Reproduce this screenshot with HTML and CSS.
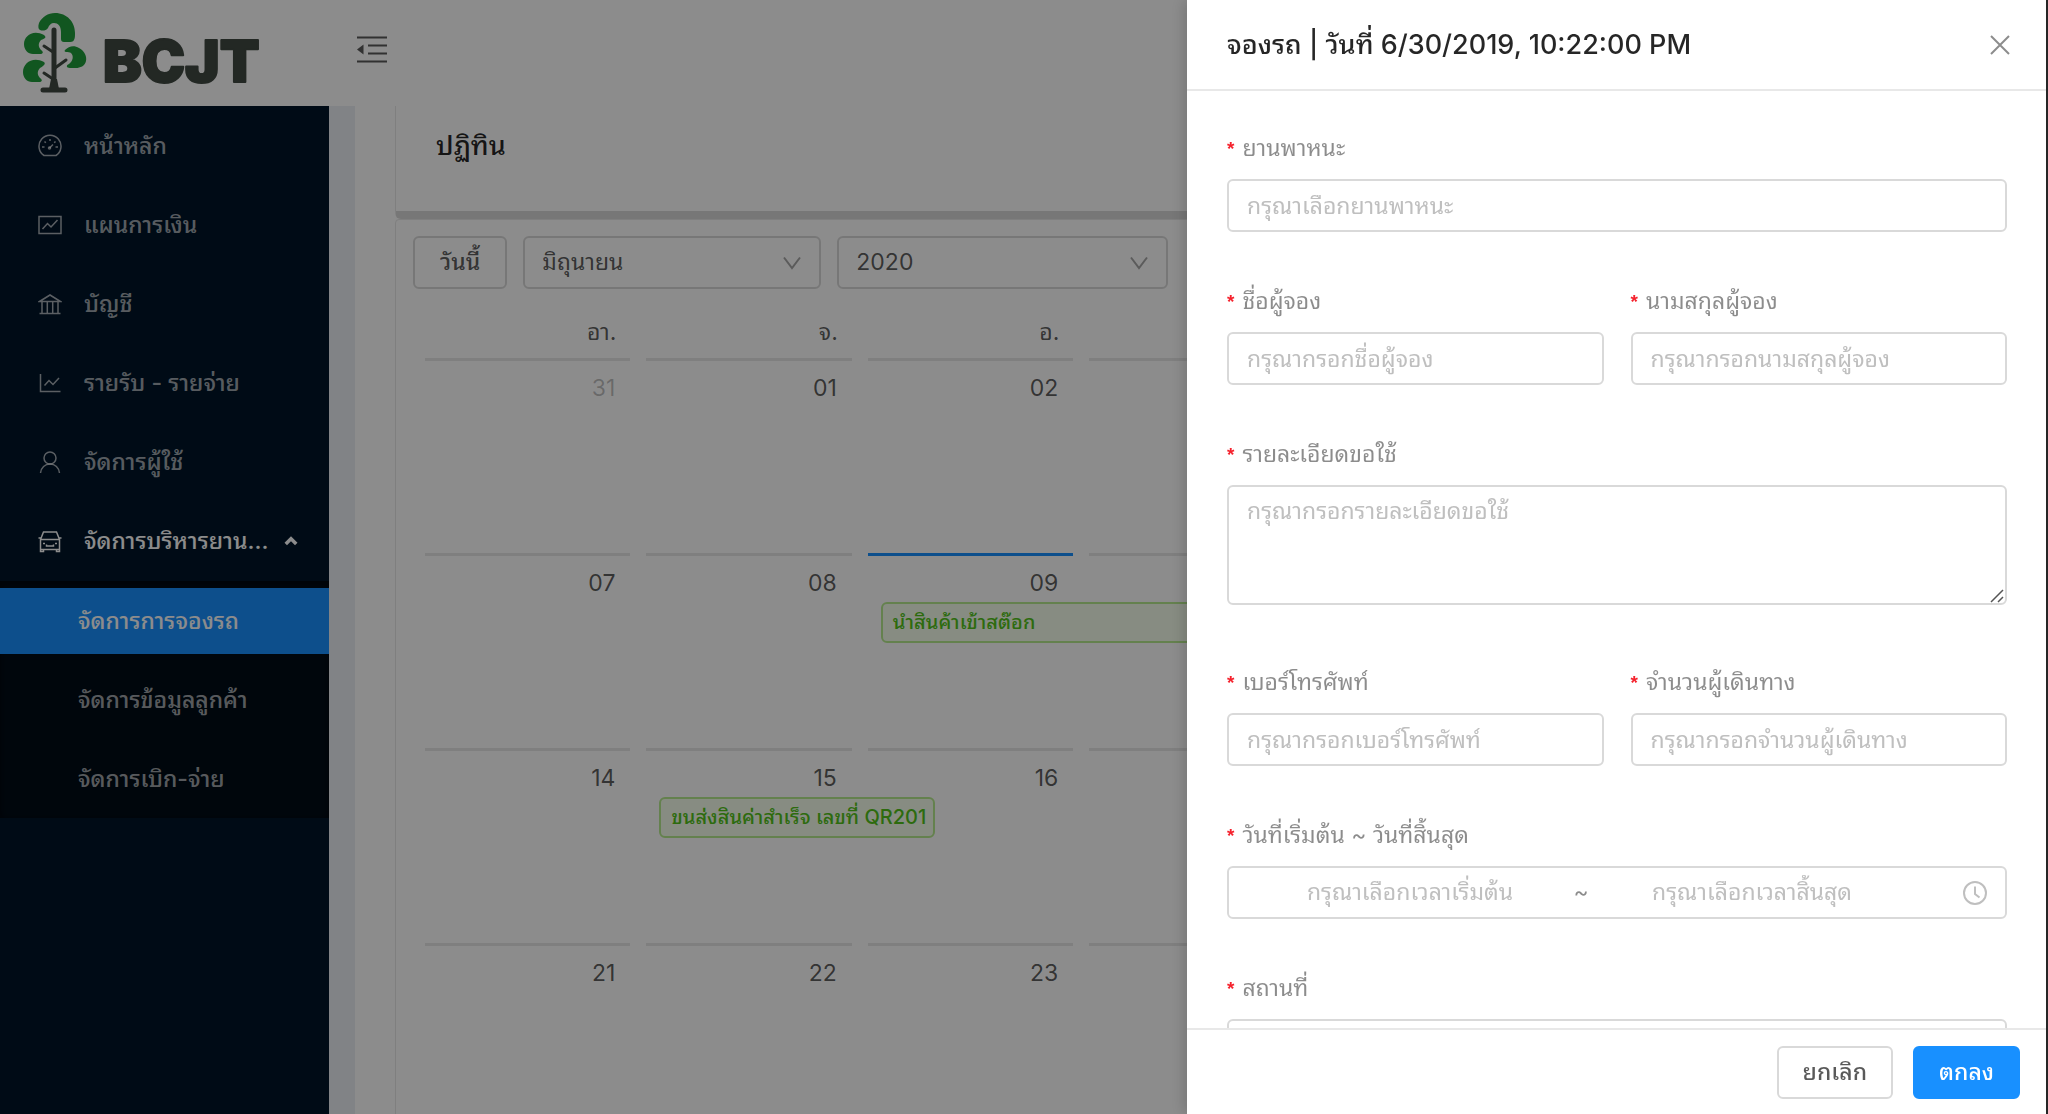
FILE: index.html
```html
<!DOCTYPE html>
<html lang="th">
<head>
<meta charset="utf-8">
<title>BCJT</title>
<link rel="stylesheet" href="styles.css">
</head>
<body>
<div class="app">
  <header class="topbar">
    <a class="brand" href="#" aria-label="BCJT">
      <svg class="brand-tree" viewBox="0 0 64 80" aria-hidden="true">
        <g fill="#1f9d3b">
          <path d="M17 17c-2-1-2-4-1-7C19 4 25 0 32 0c12 0 20 9 20 20 0 3 0 5-1 7-1 2-3 2-6 2h-4c-2 0-3-1-3-3V19c0-6-3-9-7-9-3 0-5 2-6 5-2 3-6 3-8 2z"/>
          <path d="M21 22C10 16 1 23 1 31c0 6 4 10 9 10h7c3 0 4-2 1-4-3-3-3-7 0-10 2-1 3-1 4-2 1-1 0-2-1-3z"/>
          <path d="M42 37c4-4 9-5 14-2 6 3 8 9 7 13-1 5-6 7-10 7h-6c-4 0-4-3-1-4 4-3 5-8 2-11-1-1-3-1-5-1-1 0-2-1-1-2z"/>
          <path d="M21 49C10 43 0 50 0 59c0 6 4 10 9 10h7c3 0 4-2 1-4-3-3-3-7 0-10 2-1 3-2 4-3 1-1 1-2 0-3z"/>
        </g>
        <g stroke="#404942" stroke-linecap="round" fill="none">
          <path stroke-width="5" d="M31 17v58M20 77h22"/>
          <path stroke-width="3" d="M21 33l9 6M43 47L32 55M21 60l9 6"/>
        </g>
        <path fill="#404942" d="M28 66h6l2 10H26z"/>
      </svg>
      <svg class="brand-name" viewBox="0 0 190 84" aria-hidden="true"><text x="2" y="63">BCJT</text></svg>
    </a>
    <button class="icon-button" type="button" aria-label="ย่อเมนู">
      <svg viewBox="0 0 30 28" aria-hidden="true"><path d="M0 1.500h30M11 9.500h19M11 17.500h19M0 25.500h30" stroke="currentColor" stroke-width="2.200" fill="none"/><path d="M0 13.500l6.500-5v10z" fill="currentColor" stroke="none"/></svg>
    </button>
  </header>

  <div class="shell">
    <nav class="sider">
      <ul class="menu">
        <li><a class="menu-item" href="#"><svg viewBox="0 0 24 24"><path d="M6 21.500A11 11 0 1 1 18 21.500Z"/><path d="M12 5v2M6.500 7.500l1.300 1.300M17.500 7.500l-1.300 1.300M4 13h2.500M17.500 13H20M11.500 14l3.500-3.500"/><circle cx="11.500" cy="14" r="1"/></svg><span>หน้าหลัก</span></a></li>
        <li><a class="menu-item" href="#"><svg viewBox="0 0 24 24"><path d="M1 3.500h22v17H1z"/><path d="M4.500 16l5-5.500 3.500 3.500 6.500-7"/></svg><span>แผนการเงิน</span></a></li>
        <li><a class="menu-item" href="#"><svg viewBox="0 0 24 24"><path d="M1.500 9.500L12 3l10.500 6.500zM1.500 21.500h21M4 9.500v12M9.300 9.500v12M14.700 9.500v12M20 9.500v12"/></svg><span>บัญชี</span></a></li>
        <li><a class="menu-item" href="#"><svg viewBox="0 0 24 24"><path d="M2.500 3v17.500h20M6.500 14.500l4.500-5 4 4 6-6.500"/></svg><span>รายรับ - รายจ่าย</span></a></li>
        <li><a class="menu-item" href="#"><svg viewBox="0 0 24 24"><circle cx="12" cy="8" r="6"/><path d="M2.500 23c.5-5.500 4.500-9 9.500-9s9 3.500 9.500 9"/></svg><span>จัดการผู้ใช้</span></a></li>
        <li>
          <a class="menu-item menu-item--open" href="#" aria-expanded="true"><svg viewBox="0 0 24 24"><path d="M2.500 10.500L5.500 3h13l3 7.500v10h-19zM.5 9h2.500M21 9h2.500M2.500 10.500h19M2.500 20v2.500h3V20M18.500 20v2.500h3V20M8.500 15.500v1.500h7v-1.500M5 14.500h2M17 14.500h2"/></svg><span>จัดการบริหารยาน...</span><svg class="menu-caret" viewBox="0 0 12 12"><path d="M1.500 8.500L6 4l4.500 4.500"/></svg></a>
          <ul class="submenu">
            <li><a class="submenu-item submenu-item--active" href="#" aria-current="page">จัดการการจองรถ</a></li>
            <li><a class="submenu-item" href="#">จัดการข้อมูลลูกค้า</a></li>
            <li><a class="submenu-item" href="#">จัดการเบิก-จ่าย</a></li>
          </ul>
        </li>
      </ul>
    </nav>

    <main class="content">
      <section class="card card--title"><h1>ปฏิทิน</h1></section>
      <section class="card card--calendar">
        <div class="toolbar">
          <button class="btn" type="button">วันนี้</button>
          <div class="select select--month">
            <select aria-label="เดือน"><option>มิถุนายน</option></select>
            <svg viewBox="0 0 18 14" aria-hidden="true"><path d="M1 1.500l8 10.500 8-10.500"/></svg>
          </div>
          <div class="select select--year">
            <select aria-label="ปี"><option>2020</option></select>
            <svg viewBox="0 0 18 14" aria-hidden="true"><path d="M1 1.500l8 10.500 8-10.500"/></svg>
          </div>
        </div>
        <div class="calendar-wrap">
          <table class="calendar">
            <thead><tr><th>อา.</th><th>จ.</th><th>อ.</th><th>พ.</th><th>พฤ.</th><th>ศ.</th><th>ส.</th></tr></thead>
            <tbody>
              <tr>
                <td><div class="day day--other">31</div></td><td><div class="day">01</div></td><td><div class="day">02</div></td><td><div class="day">03</div></td><td><div class="day">04</div></td><td><div class="day">05</div></td><td><div class="day">06</div></td>
              </tr>
              <tr>
                <td><div class="day">07</div></td><td><div class="day">08</div></td><td><div class="day day--today">09<a class="event event--wide" href="#">นำสินค้าเข้าสต๊อก</a></div></td><td><div class="day">10</div></td><td><div class="day">11</div></td><td><div class="day">12</div></td><td><div class="day">13</div></td>
              </tr>
              <tr>
                <td><div class="day">14</div></td><td><div class="day">15<a class="event" href="#">ขนส่งสินค่าสำเร็จ เลขที่ QR201</a></div></td><td><div class="day">16</div></td><td><div class="day">17</div></td><td><div class="day">18</div></td><td><div class="day">19</div></td><td><div class="day">20</div></td>
              </tr>
              <tr>
                <td><div class="day">21</div></td><td><div class="day">22</div></td><td><div class="day">23</div></td><td><div class="day">24</div></td><td><div class="day">25</div></td><td><div class="day">26</div></td><td><div class="day">27</div></td>
              </tr>
            </tbody>
          </table>
        </div>
      </section>
    </main>
  </div>
</div>

<div class="mask"></div>

<aside class="drawer" role="dialog" aria-labelledby="drawer-title">
  <header class="drawer-header">
    <h2 id="drawer-title">จองรถ | วันที่ 6/30/2019, 10:22:00 PM</h2>
    <button class="drawer-close" type="button" aria-label="ปิด"><svg viewBox="0 0 20 20" aria-hidden="true"><path d="M1 1l18 18M19 1L1 19"/></svg></button>
  </header>
  <form class="drawer-body" id="booking">
    <div class="field">
      <label for="vehicle">ยานพาหนะ</label>
      <input class="control" id="vehicle" type="text" placeholder="กรุณาเลือกยานพาหนะ">
    </div>
    <div class="row">
      <div class="field">
        <label for="first">ชื่อผู้จอง</label>
        <input class="control" id="first" type="text" placeholder="กรุณากรอกชื่อผู้จอง">
      </div>
      <div class="field">
        <label for="last">นามสกุลผู้จอง</label>
        <input class="control" id="last" type="text" placeholder="กรุณากรอกนามสกุลผู้จอง">
      </div>
    </div>
    <div class="field field--area">
      <label for="detail">รายละเอียดขอใช้</label>
      <textarea class="control control--area" id="detail" placeholder="กรุณากรอกรายละเอียดขอใช้"></textarea>
    </div>
    <div class="row">
      <div class="field">
        <label for="phone">เบอร์โทรศัพท์</label>
        <input class="control" id="phone" type="tel" placeholder="กรุณากรอกเบอร์โทรศัพท์">
      </div>
      <div class="field">
        <label for="count">จำนวนผู้เดินทาง</label>
        <input class="control" id="count" type="text" placeholder="กรุณากรอกจำนวนผู้เดินทาง">
      </div>
    </div>
    <div class="field">
      <label for="start">วันที่เริ่มต้น ~ วันที่สิ้นสุด</label>
      <div class="control range">
        <input id="start" type="text" placeholder="กรุณาเลือกเวลาเริ่มต้น">
        <span>~</span>
        <input type="text" aria-label="วันที่สิ้นสุด" placeholder="กรุณาเลือกเวลาสิ้นสุด">
        <svg viewBox="0 0 24 24" aria-hidden="true"><circle cx="12" cy="12" r="11"/><path d="M12 5.500V13l4.500 3.500"/></svg>
      </div>
    </div>
    <div class="field">
      <label for="place">สถานที่</label>
      <input class="control" id="place" type="text">
    </div>
  </form>
  <footer class="drawer-footer">
    <button class="btn" type="button">ยกเลิก</button>
    <button class="btn btn--primary" type="submit" form="booking">ตกลง</button>
  </footer>
</aside>
</body>
</html>
```
FILE: styles.css
```css
* { box-sizing: border-box; }

:root {
  --text: rgba(0, 0, 0, 0.65);
  --heading: rgba(0, 0, 0, 0.85);
  --muted: rgba(0, 0, 0, 0.45);
  --placeholder: #bfbfbf;
  --border: #d9d9d9;
  --line: #e8e8e8;
  --blue: #1890ff;
}

html, body { height: 100%; }

body {
  margin: 0;
  overflow: hidden;
  color: var(--text);
  font: 23px/35px Inter, Thonburi, "Noto Sans Thai Looped", Loma, Waree, "Noto Sans Thai", "Noto Sans", sans-serif;
}

h1, h2 { margin: 0; font-size: 27px; line-height: 36px; font-weight: 500; color: var(--heading); }
ul { margin: 0; padding: 0; list-style: none; }
a { color: inherit; text-decoration: none; }
button, input, select, textarea { font: inherit; color: inherit; }
svg { display: block; flex: none; fill: none; stroke: currentColor; stroke-width: 2; }

.app { display: flex; flex-direction: column; height: 100vh; overflow: hidden; }

.topbar { display: flex; align-items: center; flex: none; height: 106px; background: #fff; }
.brand { display: flex; align-items: center; gap: 14px; width: 328px; padding-left: 23px; }
.brand-tree { width: 64px; height: 80px; stroke: none; }
.brand-name { width: 190px; height: 84px; margin-top: 16px; }
.brand-name text { font: 900 58px Inter, sans-serif; fill: #404942; stroke: #404942; stroke-width: 2; stroke-linejoin: round; }
.icon-button { width: 30px; height: 28px; margin: 0 0 6px 29px; padding: 0; border: 0; background: none; color: var(--text); }

.shell { display: flex; flex: 1; min-height: 0; background: #eceef5; }

.sider { flex: none; width: 329px; background: #001529; color: rgba(255, 255, 255, 0.65); overflow: hidden; }
.menu li { display: flow-root; }
.menu-item, .submenu-item { display: flex; align-items: center; height: 66px; margin: 7px 0 6px; font-weight: 500; white-space: nowrap; }
.menu-item { gap: 22px; padding-left: 38px; }
.menu-item svg { width: 24px; height: 24px; stroke-width: 1.5; }
.menu-item .menu-caret { width: 14px; height: 14px; margin-left: -6px; stroke-width: 3; }
.menu-item--open { margin-bottom: 7px; color: #fff; }
.submenu { display: flow-root; background: #000c17; box-shadow: inset 0 2px 8px rgba(0, 0, 0, 0.45); }
.submenu-item { padding-left: 78px; }
.submenu-item--active { background: var(--blue); color: #fff; }

.content { flex: 1; min-width: 0; margin: 0 19px 0 26px; padding: 0 40px; background: #fff; overflow: hidden; }
.card { border: 1px solid var(--line); border-radius: 4px; background: #fff; }
.card--title { height: 113px; padding: 22px 40px; border-top: 0; border-bottom: 8px solid #d9d9d9; border-radius: 0 0 6px 6px; }
.card--calendar { padding: 16px 17px; }

.toolbar { display: flex; gap: 16px; }
.btn { height: 53px; padding: 0 25px; border: 2px solid var(--border); border-radius: 6px; background: #fff; font-weight: 500; }
.btn--primary { border-color: var(--blue); background: var(--blue); color: #fff; }
.select { position: relative; }
.select--month { width: 298px; }
.select--year { width: 331px; }
.select select { width: 100%; height: 53px; padding: 0 17px; border: 2px solid var(--border); border-radius: 6px; background: #fff; appearance: none; }
.select svg { position: absolute; right: 20px; top: 20px; width: 18px; height: 14px; color: rgba(0, 0, 0, 0.35); }

.calendar-wrap { padding: 26px 4px 0; }
.calendar { width: 100%; border-spacing: 0; table-layout: fixed; }
.calendar th { height: 43px; padding: 0 22px 0 0; font-weight: 400; text-align: right; vertical-align: top; }
.calendar td { height: 195px; padding: 0 8px; vertical-align: top; }
.day { padding: 10px 15px 0 13px; border-top: 3px solid var(--line); text-align: right; }
.day--other { color: rgba(0, 0, 0, 0.25); }
.day--today { border-top-color: var(--blue); }
.event { display: block; width: 276px; height: 41px; margin-top: 1px; padding: 0 10px; border: 2px solid #b7eb8f; border-radius: 6px; background: #f6ffed; color: #52c41a; font-size: 20px; line-height: 37px; font-weight: 500; text-align: left; white-space: nowrap; overflow: hidden; }
.event--wide { width: 720px; }

.mask { position: fixed; inset: 0; background: rgba(0, 0, 0, 0.45); }

.drawer { position: fixed; top: 0; right: 0; bottom: 0; display: flex; flex-direction: column; width: 861px; border-right: 2px solid #262626; background: #fff; box-shadow: -4px 0 13px rgba(0, 0, 0, 0.15); }
.drawer-header { display: flex; align-items: center; justify-content: space-between; flex: none; height: 91px; padding: 0 36px 0 40px; border-bottom: 2px solid var(--line); }
.drawer-close { padding: 0; border: 0; background: none; color: var(--muted); }
.drawer-close svg { width: 20px; height: 20px; }
.drawer-body { flex: 1; min-height: 0; padding: 40px 39px 0 40px; overflow: hidden; }
.drawer-footer { display: flex; justify-content: flex-end; gap: 20px; flex: none; height: 86px; padding: 16px 26px 0; border-top: 2px solid var(--line); }
.drawer-footer .btn { padding: 0 24px; }

.row { display: grid; grid-template-columns: 1fr 1fr; gap: 27px; }
.field { margin-bottom: 52px; }
.field--area { margin-bottom: 60px; }
.field label { display: flex; gap: 8px; height: 35px; margin-bottom: 13px; color: var(--muted); white-space: nowrap; }
.field label::before { content: "*"; color: #f5222d; font: 700 19px/35px "Liberation Sans", sans-serif; }
.control { display: block; width: 100%; height: 53px; padding: 0 18px; border: 2px solid var(--border); border-radius: 6px; background: #fff; outline: 0; }
.control--area { height: 120px; padding: 7px 18px; resize: vertical; }
.control--area::-webkit-resizer { background: url("data:image/svg+xml,%3Csvg xmlns='http://www.w3.org/2000/svg' viewBox='0 0 15 15'%3E%3Cpath d='M1 14L13 2M8 14l5-5' stroke='%23555' stroke-width='1.500'/%3E%3C/svg%3E") no-repeat; }
::placeholder { color: var(--placeholder); opacity: 1; }
.range { display: flex; align-items: center; color: var(--muted); }
.range input { flex: 1; min-width: 0; padding: 0; border: 0; outline: 0; background: none; text-align: center; }
.range span { width: 16px; text-align: center; }
.range svg { width: 24px; height: 24px; margin-left: 48px; color: var(--placeholder); }
```
